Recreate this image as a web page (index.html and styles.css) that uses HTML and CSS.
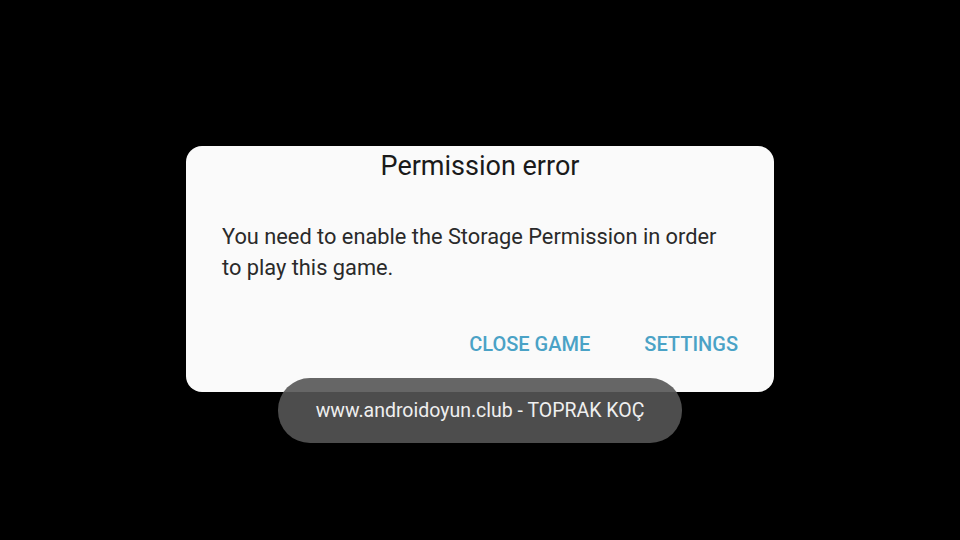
FILE: index.html
```html
<!DOCTYPE html>
<html lang="en">
<head>
    <meta charset="UTF-8">
    <title>Permission error</title>
    <link rel="stylesheet" href="styles.css">
</head>
<body>
    <div class="screen">
        <div class="dialog">
            <h1 class="title">Permission error</h1>
            <p class="message">You need to enable the Storage Permission in order to play this game.</p>
            <div class="actions">
                <button type="button">CLOSE GAME</button>
                <button type="button">SETTINGS</button>
            </div>
        </div>

        <!-- toast sits over the dialog edge -->
        <div class="toast">www.androidoyun.club - TOPRAK KOÇ</div>
    </div>
</body>
</html>
```

FILE: styles.css
```css
* {
    margin: 0px;
    padding: 0px;
    border: none;
    box-sizing: border-box;
}

html, body {
    width: 960px;
    height: 540px;
    background-color: #000;
    overflow: hidden;
}

body {
    font-family: Roboto, "Noto Sans", sans-serif;
}

.screen {
    position: relative;
    width: 960px;
    height: 540px;
    padding: 146px 0 0 186px;
}

.dialog {
    width: 588px;
    height: 246px;
    background-color: #fafafa;
    border-radius: 16px;
    padding: 4px 36px 0 36px;
}

.title {
    font-size: 27px;
    font-weight: normal;
    color: #1a1a1a;
    text-align: center;
    line-height: 32px;
}

.message {
    margin-top: 39px;
    max-width: 500px;
    font-size: 21.8px;
    line-height: 31px;
    color: #2a2a2a;
}

.actions {
    display: flex;
    justify-content: flex-end;
    gap: 54px;
    margin-top: 49px;
}

.actions button {
    background: none;
    font-family: Roboto, sans-serif;
    font-size: 20px;
    font-weight: 500;
    color: #4aa2c6;
    line-height: 24px;
}

.toast {
    position: absolute;
    left: 278px;
    top: 378px;
    width: 404px;
    height: 65px;
    border-radius: 32px;
    background-color: rgba(85, 85, 85, 0.9);
    color: #efefef;
    font-size: 19.5px;
    display: flex;
    align-items: center;
    justify-content: center;
}
```
